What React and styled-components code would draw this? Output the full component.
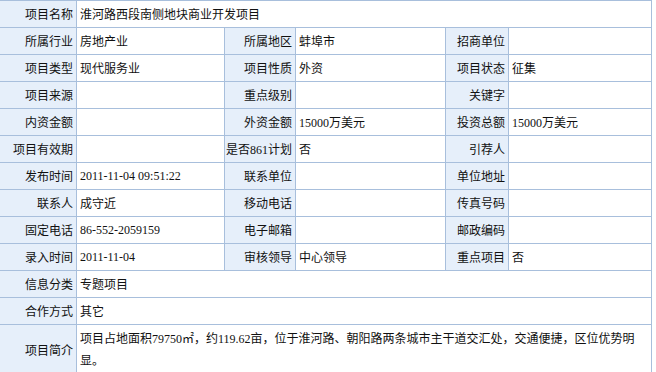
import React from "react";
import styled, { createGlobalStyle } from "styled-components";

const Global = createGlobalStyle`
  body {
    margin: 0;
    background: #fff;
    font-family: "Liberation Serif", "Noto Sans CJK SC", serif;
    font-size: 12px;
    color: #111;
  }
`;

const Table = styled.table`
  width: 652px;
  margin-left: -1px;
  border-collapse: collapse;
  table-layout: fixed;
`;

const Row = styled.tr`
  height: 27px;
`;

const Label = styled.th`
  background: #e6effa;
  border: 1px solid #a8bfdc;
  font-weight: normal;
  text-align: right;
  padding: 0 3px 0 0;
  white-space: nowrap;
  vertical-align: middle;
`;

const Value = styled.td`
  background: #fff;
  border: 1px solid #a8bfdc;
  text-align: left;
  padding: ${(p) => (p.$tall ? "3px 4px 3px 3px" : "0 2px 0 3px")};
  line-height: ${(p) => (p.$tall ? "22px" : "normal")};
  vertical-align: ${(p) => (p.$tall ? "top" : "middle")};
`;

const rows = [
  [["所属行业", "房地产业"], ["所属地区", "蚌埠市"], ["招商单位", ""]],
  [["项目类型", "现代服务业"], ["项目性质", "外资"], ["项目状态", "征集"]],
  [["项目来源", ""], ["重点级别", ""], ["关键字", ""]],
  [["内资金额", ""], ["外资金额", "15000万美元"], ["投资总额", "15000万美元"]],
  [["项目有效期", ""], ["是否861计划", "否"], ["引荐人", ""]],
  [["发布时间", "2011-11-04 09:51:22"], ["联系单位", ""], ["单位地址", ""]],
  [["联系人", "成守近"], ["移动电话", ""], ["传真号码", ""]],
  [["固定电话", "86-552-2059159"], ["电子邮箱", ""], ["邮政编码", ""]],
  [["录入时间", "2011-11-04"], ["审核领导", "中心领导"], ["重点项目", "否"]],
];

export default function App() {
  return (
    <>
      <Global />
      <Table>
        <colgroup>
          <col style={{ width: 77 }} />
          <col style={{ width: 148 }} />
          <col style={{ width: 71 }} />
          <col style={{ width: 150 }} />
          <col style={{ width: 63 }} />
          <col style={{ width: 143 }} />
        </colgroup>
        <tbody>
          <Row>
            <Label>项目名称</Label>
            <Value colSpan={5}>淮河路西段南侧地块商业开发项目</Value>
          </Row>
          {rows.map((r, i) => (
            <Row key={i}>
              {r.map(([k, v]) => (
                <React.Fragment key={k}>
                  <Label>{k}</Label>
                  <Value>{v}</Value>
                </React.Fragment>
              ))}
            </Row>
          ))}
          <Row>
            <Label>信息分类</Label>
            <Value colSpan={5}>专题项目</Value>
          </Row>
          <Row>
            <Label>合作方式</Label>
            <Value colSpan={5}>其它</Value>
          </Row>
          <tr>
            <Label>项目简介</Label>
            <Value colSpan={5} $tall>
              项目占地面积79750㎡，约119.62亩，位于淮河路、朝阳路两条城市主干道交汇处，交通便捷，区位优势明显。
            </Value>
          </tr>
        </tbody>
      </Table>
    </>
  );
}
